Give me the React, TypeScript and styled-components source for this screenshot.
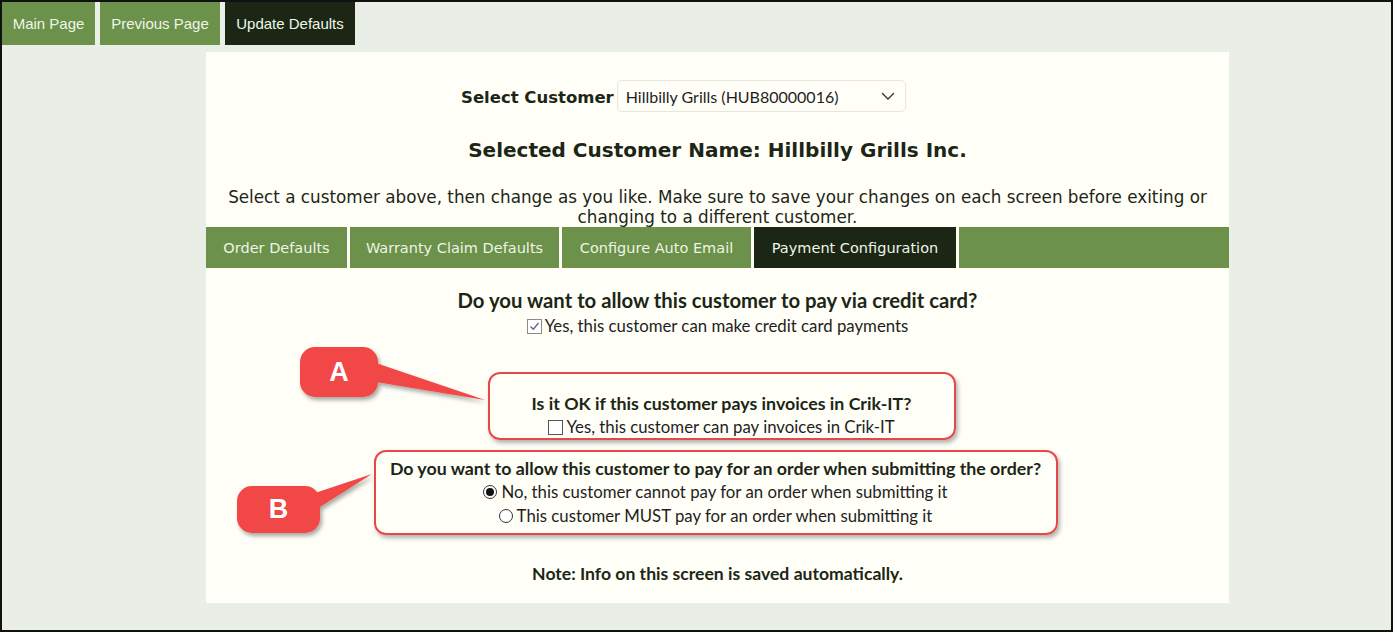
import React from 'react';
import styled, { createGlobalStyle } from 'styled-components';

const GlobalStyle = createGlobalStyle`
  html, body {
    margin: 0;
    padding: 0;
    background: #e9eee6;
  }
  * { box-sizing: border-box; }
`;

const VERDANA = `'DejaVu Sans', Verdana, sans-serif`;
const SEGOE = `Lato, 'Open Sans', sans-serif`;

const Frame = styled.div`
  width: 1393px;
  height: 632px;
  border: 2px solid #111;
  background: #e9eee6;
  position: relative;
  overflow: hidden;
`;

const TopNav = styled.nav`
  display: flex;
  gap: 5px;
  height: 43px;
`;

const NavButton = styled.div<{ $active?: boolean; $w: number }>`
  width: ${p => p.$w}px;
  display: flex;
  align-items: center;
  justify-content: center;
  background: ${p => (p.$active ? '#1b2714' : '#6b914a')};
  color: #eef6ea;
  font-family: 'Liberation Sans', Arial, sans-serif;
  font-size: 15px;
`;

const Panel = styled.main`
  position: relative;
  width: 1023px;
  height: 551px;
  margin: 7px 0 0 204px;
  background: #fffff8;
  color: #1c2616;
`;

const SelectRow = styled.div`
  display: flex;
  align-items: center;
  padding: 28px 0 0 255px;
  gap: 3px;
`;

const SelectLabel = styled.label`
  font-family: ${VERDANA};
  font-weight: bold;
  font-size: 16.5px;
  padding-top: 3px;
`;

const SelectBox = styled.div`
  width: 289px;
  height: 32px;
  border: 1px solid #e6e6e0;
  border-radius: 5px;
  display: flex;
  align-items: center;
  justify-content: space-between;
  padding: 0 10px 0 8px;
  font-family: ${SEGOE};
  font-size: 16px;
  color: #1e1e1e;
`;

const Heading = styled.h2`
  margin: 25px 0 0;
  text-align: center;
  font-family: ${VERDANA};
  font-weight: bold;
  font-size: 20px;
  line-height: 26px;
`;

const Intro = styled.p`
  margin: 24px 10px 0;
  text-align: center;
  font-family: ${VERDANA};
  font-size: 16.8px;
  line-height: 20px;
`;

const TabBar = styled.div`
  display: flex;
  gap: 3px;
  height: 41px;
  margin-top: 0;
  background: #fffff8;
`;

const Tab = styled.div<{ $active?: boolean; $w?: number }>`
  ${p => (p.$w ? `width: ${p.$w}px;` : 'flex: 1;')}
  display: flex;
  align-items: center;
  justify-content: center;
  padding-top: 1px;
  background: ${p => (p.$active ? '#1b2714' : '#6b914a')};
  color: #eef4e6;
  font-family: ${VERDANA};
  font-size: 14.5px;
`;

const Section = styled.section`
  display: flex;
  flex-direction: column;
  align-items: center;
`;

const Question = styled.div<{ $size?: number }>`
  font-family: ${SEGOE};
  font-weight: bold;
  font-size: ${p => p.$size ?? 17.8}px;
  line-height: 24px;
  text-align: center;
`;

const Option = styled.div`
  display: flex;
  align-items: center;
  gap: 3px;
  font-family: ${SEGOE};
  font-size: 16.8px;
  line-height: 24px;
  color: #1e1e1e;
`;

const Box = styled.span<{ $checked?: boolean }>`
  width: 15px;
  height: 15px;
  border: 1px solid ${p => (p.$checked ? '#8a8a8a' : '#555')};
  background: #fff;
  display: inline-flex;
  align-items: center;
  justify-content: center;
`;

const Radio = styled.span<{ $checked?: boolean }>`
  width: 14px;
  height: 14px;
  margin-right: 1px;
  border-radius: 50%;
  border: 1px solid #333;
  background: #fff;
  display: inline-flex;
  align-items: center;
  justify-content: center;
  &::after {
    content: '';
    width: 8px;
    height: 8px;
    border-radius: 50%;
    background: ${p => (p.$checked ? '#111' : 'transparent')};
  }
`;

const Highlight = styled.div<{ $w: number; $h: number }>`
  width: ${p => p.$w}px;
  height: ${p => p.$h}px;
  border: 2px solid #e8474a;
  border-radius: 12px;
  box-shadow: 2px 3px 4px rgba(0, 0, 0, 0.3);
  display: flex;
  flex-direction: column;
  align-items: center;
  justify-content: center;
`;

const Note = styled.div`
  margin-top: 27px;
  font-family: ${SEGOE};
  font-weight: bold;
  font-size: 17.6px;
  line-height: 24px;
  text-align: center;
`;

const Callout = styled.div<{ $x: number; $y: number }>`
  position: absolute;
  left: ${p => p.$x}px;
  top: ${p => p.$y}px;
  width: 200px;
  height: 70px;
`;

const CalloutLetter = styled.span<{ $w: number; $h: number }>`
  position: absolute;
  left: 0;
  top: 0;
  width: ${p => p.$w}px;
  height: ${p => p.$h}px;
  display: flex;
  align-items: center;
  justify-content: center;
  color: #fff;
  font-family: 'Liberation Sans', Arial, sans-serif;
  font-weight: bold;
  font-size: 27px;
`;

const Check = () => (
  <svg width="11" height="11" viewBox="0 0 11 11">
    <path d="M1.5 5.5 L4.3 8.3 L9.5 2" fill="none" stroke="#5a6a80" strokeWidth="1.4" />
  </svg>
);

const Chevron = () => (
  <svg width="14" height="8" viewBox="0 0 14 8">
    <path d="M1 1 L7 7 L13 1" fill="none" stroke="#333" strokeWidth="1.3" />
  </svg>
);

// callout bubble: rounded body with a tail toward (tx, ty), all relative to its own box
const Bubble = ({ w, h, tx, ty, t1, t2 }: { w: number; h: number; tx: number; ty: number; t1: number; t2: number }) => (
  <svg width="200" height="70" viewBox="0 0 200 70" style={{ position: 'absolute', left: 0, top: 0, overflow: 'visible' }}>
    <defs>
      <filter id={`sh${tx}`} x="-20%" y="-30%" width="140%" height="170%">
        <feDropShadow dx="2" dy="3" stdDeviation="2" floodColor="#000" floodOpacity="0.35" />
      </filter>
    </defs>
    <g filter={`url(#sh${tx})`} fill="#f24646">
      <rect x="0" y="0" width={w} height={h} rx="15" />
      <polygon points={`${w - 8},${t1} ${tx},${ty} ${w - 8},${t2}`} />
    </g>
  </svg>
);

export default function App() {
  return (
    <Frame>
      <GlobalStyle />
      <TopNav>
        <NavButton $w={93}>Main Page</NavButton>
        <NavButton $w={120}>Previous Page</NavButton>
        <NavButton $w={130} $active>Update Defaults</NavButton>
      </TopNav>

      <Panel>
        <SelectRow>
          <SelectLabel>Select Customer</SelectLabel>
          <SelectBox>
            <span>Hillbilly Grills (HUB80000016)</span>
            <Chevron />
          </SelectBox>
        </SelectRow>

        <Heading>Selected Customer Name: Hillbilly Grills Inc.</Heading>

        <Intro>
          Select a customer above, then change as you like. Make sure to save your changes on each screen before exiting or
          changing to a different customer.
        </Intro>

        <TabBar>
          <Tab $w={141}>Order Defaults</Tab>
          <Tab $w={209}>Warranty Claim Defaults</Tab>
          <Tab $w={189}>Configure Auto Email</Tab>
          <Tab $w={202} $active>Payment Configuration</Tab>
          <Tab />
        </TabBar>

        <Section>
          <Question $size={20.3} style={{ marginTop: 20 }}>Do you want to allow this customer to pay via credit card?</Question>
          <Option style={{ marginTop: 2 }}>
            <Box $checked><Check /></Box>
            Yes, this customer can make credit card payments
          </Option>

          <div style={{ height: 34 }} />
          <Highlight $w={468} $h={68} style={{ marginLeft: 8 }}>
            <Question style={{ marginTop: 18 }}>Is it OK if this customer pays invoices in Crik-IT?</Question>
            <Option>
              <Box />
              Yes, this customer can pay invoices in Crik-IT
            </Option>
          </Highlight>

          <Highlight $w={684} $h={85} style={{ marginTop: 10, marginRight: 4 }}>
            <Question style={{ marginTop: -2 }}>Do you want to allow this customer to pay for an order when submitting the order?</Question>
            <Option>
              <Radio $checked />
              No, this customer cannot pay for an order when submitting it
            </Option>
            <Option>
              <Radio />
              This customer MUST pay for an order when submitting it
            </Option>
          </Highlight>

          <Note>Note: Info on this screen is saved automatically.</Note>
        </Section>

        <Callout $x={94} $y={295}>
          <Bubble w={78} h={50} tx={185} ty={53} t1={14} t2={34} />
          <CalloutLetter $w={78} $h={50}>A</CalloutLetter>
        </Callout>
        <Callout $x={31} $y={434}>
          <Bubble w={83} h={47} tx={135} ty={-12} t1={8} t2={26} />
          <CalloutLetter $w={83} $h={47}>B</CalloutLetter>
        </Callout>
      </Panel>
    </Frame>
  );
}
